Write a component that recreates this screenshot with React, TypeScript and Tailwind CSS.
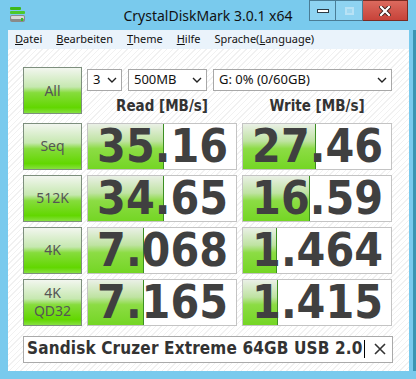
import React from "react";

type Row = {
  label: string[];
  read: string;
  readFill: number;
  write: string;
  writeFill: number;
};

const rows: Row[] = [
  { label: ["Seq"], read: "35.16", readFill: 76, write: "27.46", writeFill: 73 },
  { label: ["512K"], read: "34.65", readFill: 76, write: "16.59", writeFill: 67 },
  { label: ["4K"], read: "7.068", readFill: 56, write: "1.464", writeFill: 34 },
  { label: ["4K", "QD32"], read: "7.165", readFill: 56, write: "1.415", writeFill: 35 },
];

const uiFont = { fontFamily: '"Noto Sans", "Open Sans", sans-serif' };
const boldFont = { fontFamily: '"DejaVu Sans Condensed", "DejaVu Sans", sans-serif' };

const Chevron = () => (
  <svg width="10" height="6" viewBox="0 0 10 6" className="shrink-0">
    <path d="M1 1 L5 5 L9 1" fill="none" stroke="#222" strokeWidth="1.4" />
  </svg>
);

const AppIcon = () => (
  <svg width="18" height="18" viewBox="0 0 18 18">
    <rect x="1" y="1" width="11" height="3" rx="1" fill="#3cb818" />
    <rect x="1" y="5" width="15" height="3" rx="1" fill="#4cc82a" />
    <rect x="1" y="9" width="15" height="7" rx="2" fill="#8a8a8a" />
    <rect x="2" y="10" width="13" height="3" rx="1" fill="#d8d8d8" />
    <rect x="12" y="12" width="2" height="3" fill="#38c020" />
  </svg>
);

const GreenButton = ({ lines }: { lines: string[] }) => (
  <div
    className="flex h-[47px] w-[59px] flex-col items-center justify-center border border-[#7d8f7d] bg-[linear-gradient(to_bottom,#f2f6ef_0%,#c6e8b0_42%,#86dc3c_55%,#62d700_88%,#86e040_100%)] text-[14px] leading-[18px] text-[#555]"
    style={uiFont}
  >
    {lines.map((l) => (
      <span key={l}>{l}</span>
    ))}
  </div>
);

const ValueBox = ({ value, fill }: { value: string; fill: number }) => (
  <div className="relative h-[47px] w-[150px] border border-[#c4c4c4] bg-white">
    <div
      className="absolute inset-y-0 left-0 border-r border-[#3c8f22] bg-[linear-gradient(to_bottom,#eaf0e6_0%,#bfe3a2_38%,#8cdc44_55%,#74d624_100%)]"
      style={{ width: fill }}
    />
    <div
      className="relative flex h-full items-center justify-end pr-[8px] text-[46px] font-bold leading-none text-[#404040]"
      style={boldFont}
    >
      {value}
    </div>
  </div>
);

const Select = ({ text, width }: { text: string; width: string }) => (
  <div
    className={`flex h-[22px] items-center justify-between border border-[#a8a8a8] bg-white pl-[5px] pr-[4px] text-[13px] text-[#111] ${width}`}
    style={uiFont}
  >
    <span>{text}</span>
    <Chevron />
  </div>
);

export default function App() {
  return (
    <div className="flex h-[379px] w-[416px] flex-col bg-[#79caed]">
      {/* title bar */}
      <div className="grid h-[30px] grid-cols-[1fr_auto_1fr]">
        <div className="pl-[9px] pt-[6px]">
          <AppIcon />
        </div>
        <div className="pt-[5px] text-[14px] text-[#111]" style={uiFont}>
          CrystalDiskMark 3.0.1 x64
        </div>
        <div className="flex justify-end pr-[8px]">
          <div className="flex h-[21px] w-[27px] items-center justify-center border border-[#4a7d96] bg-[#8ed3f1]">
            <div className="mt-[1px] h-[4px] w-[12px] border border-[#2c3a44] bg-white" />
          </div>
          <div className="flex h-[21px] w-[27px] items-center justify-center border border-l-0 border-[#4a7d96] bg-[#8ed3f1]">
            <div className="h-[8px] w-[9px] border-2 border-[#b7e2f5] bg-[#9fd8f1]" />
          </div>
          <div className="flex h-[21px] w-[45px] items-center justify-center border border-l-0 border-[#7b2a22] bg-[linear-gradient(to_bottom,#dc6a5e,#c7433a)]">
            <svg width="12" height="10" viewBox="0 0 12 10">
              <path d="M2 1 L10 9 M10 1 L2 9" stroke="#3a1c18" strokeWidth="4" strokeLinecap="square" />
              <path d="M2 1 L10 9 M10 1 L2 9" stroke="#fff" strokeWidth="2.2" strokeLinecap="square" />
            </svg>
          </div>
        </div>
      </div>

      <div className="flex flex-1">
        <div className="w-[8px]" />
        {/* client area */}
        <div className="flex w-[401px] flex-col">
          <div
            className="flex h-[19px] items-center gap-[14px] bg-[#eaf3fb] pl-[7px] text-[11px] text-[#111]"
            style={uiFont}
          >
            <span>
              <u>D</u>atei
            </span>
            <span>
              <u>B</u>earbeiten
            </span>
            <span>
              <u>T</u>heme
            </span>
            <span>
              <u>H</u>ilfe
            </span>
            <span>
              Sprache(<u>L</u>anguage)
            </span>
          </div>

          <div className="h-[322px] bg-[repeating-linear-gradient(135deg,#f1f1f1_0px,#f1f1f1_1px,#ffffff_1px,#ffffff_4px)] pl-[15px] pt-[18px]">
            <div className="grid grid-cols-[59px_150px_150px] gap-[5px]">
              <GreenButton lines={["All"]} />
              <div className="col-span-2 flex flex-col">
                <div className="mt-[2px] flex gap-[6px]">
                  <Select text="3" width="w-[35px]" />
                  <Select text="500MB" width="w-[79px]" />
                  <Select text="G: 0% (0/60GB)" width="w-[179px]" />
                </div>
                <div
                  className="mt-[4px] grid grid-cols-2 gap-[5px] text-center text-[15px] font-bold text-[#333]"
                  style={boldFont}
                >
                  <span>Read [MB/s]</span>
                  <span>Write [MB/s]</span>
                </div>
              </div>
              {rows.map((r) => (
                <React.Fragment key={r.read}>
                  <GreenButton lines={r.label} />
                  <ValueBox value={r.read} fill={r.readFill} />
                  <ValueBox value={r.write} fill={r.writeFill} />
                </React.Fragment>
              ))}
            </div>

            <div className="mt-[10px] flex h-[27px] w-[370px] items-center border border-[#aaaaaa] bg-white pl-[3px] pr-[6px]">
              <span className="text-[17px] font-bold tracking-[0.15px] text-[#333]" style={boldFont}>
                Sandisk Cruzer Extreme 64GB USB 2.0
              </span>
              <div className="ml-[1px] h-[18px] w-[1px] bg-black" />
              <div className="flex-1" />
              <svg width="12" height="12" viewBox="0 0 12 12">
                <path d="M1 1 L11 11 M11 1 L1 11" stroke="#333" strokeWidth="1.6" />
              </svg>
            </div>
          </div>
        </div>
        <div className="flex w-[7px]">
          <div className="w-[4px]" />
          <div className="w-[3px] bg-[#3b95b3]" />
        </div>
      </div>
      <div className="h-[8px]" />
    </div>
  );
}
